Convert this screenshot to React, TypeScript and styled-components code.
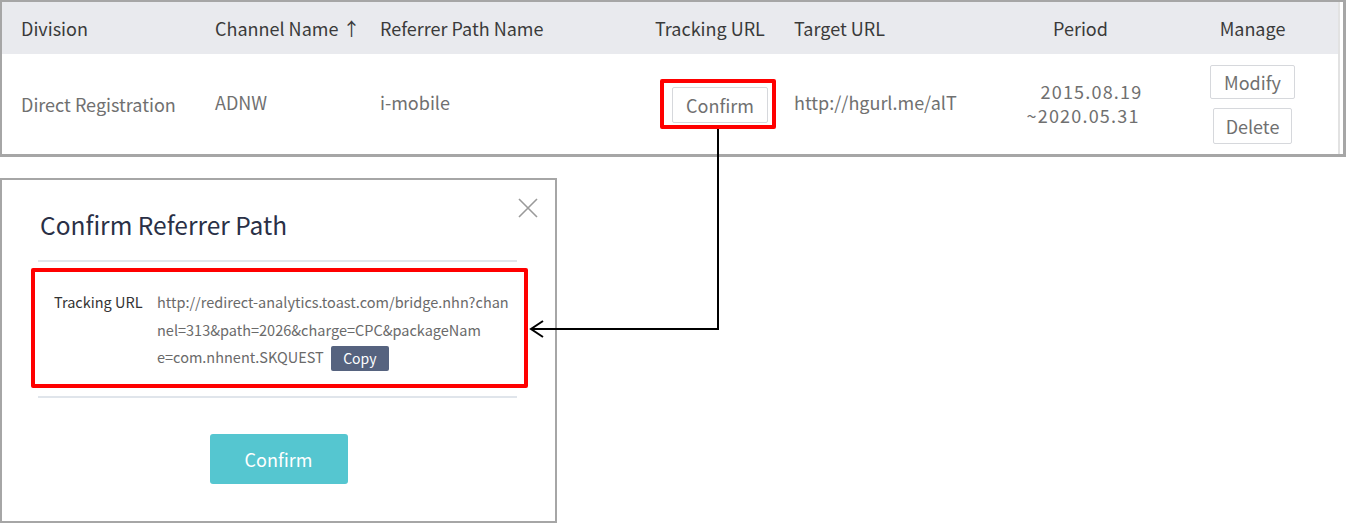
import React from 'react';
import styled, { createGlobalStyle } from 'styled-components';

const Global = createGlobalStyle`
  html, body { margin: 0; padding: 0; background: #fff; }
  body { font-family: "Noto Sans CJK KR", "Noto Sans", sans-serif; }
  * { box-sizing: border-box; }
`;

const Page = styled.div`
  position: relative;
  width: 1346px;
  height: 523px;
  display: flex;
  flex-direction: column;
  gap: 21px;
  overflow: hidden;
`;

/* ---------- table ---------- */
const TableFrame = styled.div`
  height: 157px;
  border: 2px solid #a6a6a6;
  border-right-width: 3px;
  border-bottom-width: 3px;
  display: flex;
`;

const TableArea = styled.div`
  flex: 1;
  display: flex;
  flex-direction: column;
  border-right: 2px solid #e2e2e2;
  margin-right: 3px;
`;

const COLS = '193px 165px 275px 140px 215px 181px 1fr';

const HeadRow = styled.div`
  height: 52px;
  display: grid;
  grid-template-columns: ${COLS};
  align-items: center;
  background: #e9eaee;
`;

const BodyRow = styled.div`
  flex: 1;
  display: grid;
  grid-template-columns: ${COLS};
  align-items: center;
  background: #fff;
`;

const Th = styled.div<{ $center?: boolean; $pl?: number; $pr?: number }>`
  font-size: 18px;
  color: #3a3a3a;
  padding-left: ${(p) => (p.$center ? 0 : p.$pl ?? 20)}px;
  padding-right: ${(p) => p.$pr ?? 0}px;
  text-align: ${(p) => (p.$center ? 'center' : 'left')};
  white-space: nowrap;
`;

const Td = styled.div<{ $pl?: number; $dy?: number }>`
  font-size: 18px;
  color: #707070;
  padding-left: ${(p) => p.$pl ?? 20}px;
  line-height: 24px;
  white-space: nowrap;
  margin-top: ${(p) => p.$dy ?? 0}px;
`;

const PeriodCell = styled.div`
  display: flex;
  justify-content: center;
  padding-left: 8px;
`;

const PeriodBlock = styled.div`
  font-size: 18px;
  line-height: 24px;
  color: #707070;
  letter-spacing: 1.2px;
  white-space: nowrap;
  margin-top: -2px;
`;

const DateLine = styled.div<{ $indent?: boolean }>`
  padding-left: ${(p) => (p.$indent ? 14 : 0)}px;
`;

const ActionCell = styled.div`
  display: flex;
  flex-direction: column;
  align-items: center;
  gap: 9px;
  padding-right: 4px;
`;

const Highlight = styled.div`
  display: inline-flex;
  border: 4px solid #ff0000;
  border-radius: 2px;
`;

const CellHighlight = styled(Highlight)`
  margin-left: 25px;
  padding: 4px 4px 2px 8px;
`;

const LineButton = styled.button<{ $w: number; $h: number }>`
  width: ${(p) => p.$w}px;
  height: ${(p) => p.$h}px;
  border: 1px solid #d6d8dc;
  border-radius: 2px;
  background: #fff;
  color: #707070;
  font-family: inherit;
  font-size: 18px;
  padding: 0;
  cursor: pointer;
`;

/* ---------- modal ---------- */
const Modal = styled.div`
  position: relative;
  width: 557px;
  height: 345px;
  border: 2px solid #a6a6a6;
  padding: 28px 38px 37px 36px;
  display: flex;
  flex-direction: column;
  background: #fff;
`;

const Title = styled.h2`
  margin: 0;
  font-size: 24.5px;
  line-height: 34px;
  font-weight: 400;
  color: #2a3046;
  padding-left: 2px;
`;

const Divider = styled.div<{ $mt: number }>`
  height: 2px;
  background: #e0e5eb;
  margin-top: ${(p) => p.$mt}px;
`;

const Close = styled.button`
  position: absolute;
  top: 18px;
  right: 17px;
  width: 20px;
  height: 20px;
  padding: 0;
  border: 0;
  background: transparent;
  cursor: pointer;
  display: flex;
`;

const InfoBox = styled(Highlight)`
  margin: 6px -11px 0 -7px;
  height: 120px;
  padding: 16px 10px 0 19px;
  display: grid;
  grid-template-columns: 103px 1fr;
  align-items: start;
`;

const Label = styled.div`
  font-size: 14.5px;
  line-height: 27.5px;
  color: #333;
  white-space: nowrap;
`;

const Url = styled.div`
  font-size: 14.5px;
  line-height: 27.5px;
  color: #6a6a6a;
  white-space: nowrap;
`;

const CopyButton = styled.button`
  display: inline-block;
  vertical-align: middle;
  margin-left: 7px;
  width: 58px;
  height: 25px;
  border: 0;
  border-radius: 2px;
  background: #56637f;
  color: #fff;
  font-family: inherit;
  font-size: 14px;
  padding: 0;
  position: relative;
  top: -1px;
`;

const Footer = styled.div`
  margin-top: 36px;
  display: flex;
  justify-content: center;
  padding-left: 2px;
`;

const PrimaryButton = styled.button`
  width: 138px;
  height: 50px;
  border: 0;
  border-radius: 3px;
  background: #55c6d0;
  color: #fff;
  font-family: inherit;
  font-size: 18px;
  padding: 0;
`;

const Annotation = styled.svg`
  position: absolute;
  left: 0;
  top: 0;
  pointer-events: none;
`;

export default function App() {
  return (
    <>
      <Global />
      <Page>
        <TableFrame>
          <TableArea>
            <HeadRow>
              <Th $pl={19}>Division</Th>
              <Th>Channel Name ↑</Th>
              <Th>Referrer Path Name</Th>
              <Th>Tracking URL</Th>
              <Th $pl={19}>Target URL</Th>
              <Th $center>Period</Th>
              <Th $center $pr={4}>Manage</Th>
            </HeadRow>
            <BodyRow>
              <Td $pl={19} $dy={0}>Direct Registration</Td>
              <Td $dy={-5}>ADNW</Td>
              <Td $dy={-5}>i-mobile</Td>
              <div>
                <CellHighlight>
                  <LineButton $w={96} $h={36}>Confirm</LineButton>
                </CellHighlight>
              </div>
              <Td $pl={19} $dy={-5}>http://hgurl.me/alT</Td>
              <PeriodCell>
                <PeriodBlock>
                  <DateLine $indent>2015.08.19</DateLine>
                  <DateLine>~2020.05.31</DateLine>
                </PeriodBlock>
              </PeriodCell>
              <ActionCell>
                <LineButton $w={85} $h={34}>Modify</LineButton>
                <LineButton $w={79} $h={36}>Delete</LineButton>
              </ActionCell>
            </BodyRow>
          </TableArea>
        </TableFrame>

        <Modal>
          <Title>Confirm Referrer Path</Title>
          <Close aria-label="close">
            <svg width="20" height="20" viewBox="0 0 20 20">
              <path d="M1 1 L19 19 M19 1 L1 19" stroke="#9a9a9a" strokeWidth="1.6" fill="none" />
            </svg>
          </Close>
          <Divider $mt={18} />
          <InfoBox>
            <Label>Tracking URL</Label>
            <Url>
              http://redirect-analytics.toast.com/bridge.nhn?chan
              <br />
              nel=313&amp;path=2026&amp;charge=CPC&amp;packageNam
              <br />
              e=com.nhnent.SKQUEST
              <CopyButton>Copy</CopyButton>
            </Url>
          </InfoBox>
          <Divider $mt={8} />
          <Footer>
            <PrimaryButton>Confirm</PrimaryButton>
          </Footer>
        </Modal>

        <Annotation width="1346" height="523" viewBox="0 0 1346 523">
          <polyline points="718,129 718,329 531,329" fill="none" stroke="#000" strokeWidth="2" />
          <polyline points="543,321 531,329 543,337" fill="none" stroke="#000" strokeWidth="2" />
        </Annotation>
      </Page>
    </>
  );
}
